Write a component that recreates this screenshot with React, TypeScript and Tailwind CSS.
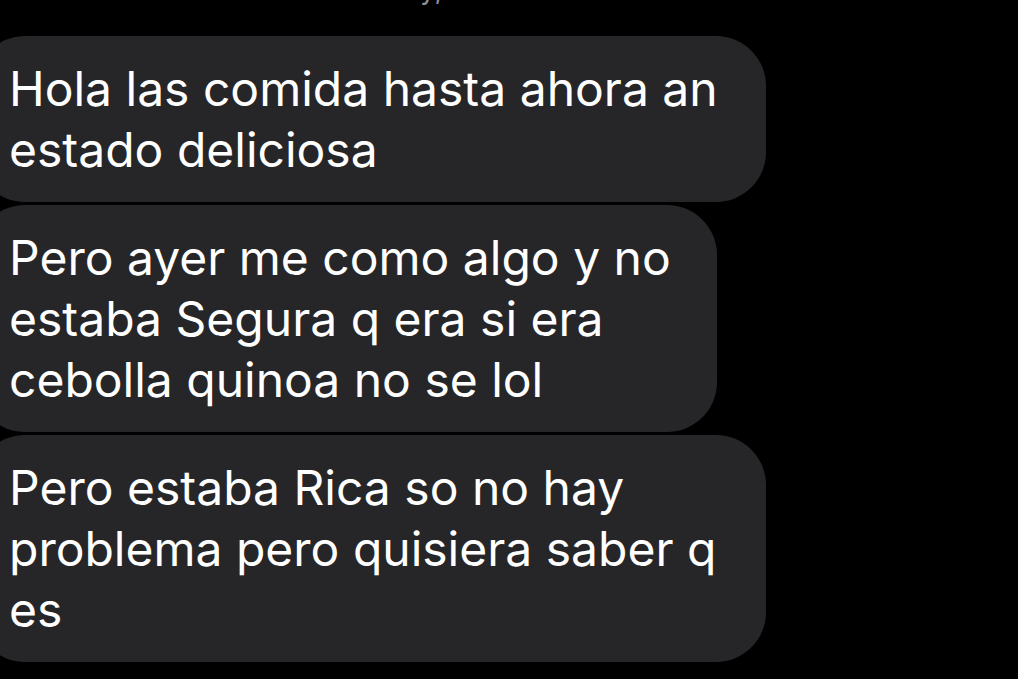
const messages = [
  ["Hola las comida hasta ahora an", "estado deliciosa"],
  ["Pero ayer me como algo y no", "estaba Segura q era si era", "cebolla quinoa no se lol"],
  ["Pero estaba Rica so no hay", "problema pero quisiera saber q", "es"],
];

const widths = ["w-[791px]", "w-[742px]", "w-[791px]"];

export default function App() {
  return (
    <main
      className="w-[1018px] h-[679px] overflow-hidden bg-black"
      style={{ fontFamily: "Inter, 'Noto Sans', sans-serif" }}
    >
      <div className="h-[36px] overflow-hidden flex justify-center">
        <p className="-mt-[27px] text-[28px] text-[#8e8e93] leading-[32px] pr-[40px]">
          Hoy, 10:45 a. m.
        </p>
      </div>
      <div className="flex flex-col gap-[3px] -ml-[25px]">
        {messages.map((lines, i) => (
          <div
            key={i}
            className={`${widths[i]} bg-[#262629] rounded-[50px] pl-[34px] py-[22px] text-white text-[48px] leading-[61px]`}
          >
            {lines.map((l, j) => (
              <div key={j} className="whitespace-nowrap">
                {l}
              </div>
            ))}
          </div>
        ))}
      </div>
    </main>
  );
}
